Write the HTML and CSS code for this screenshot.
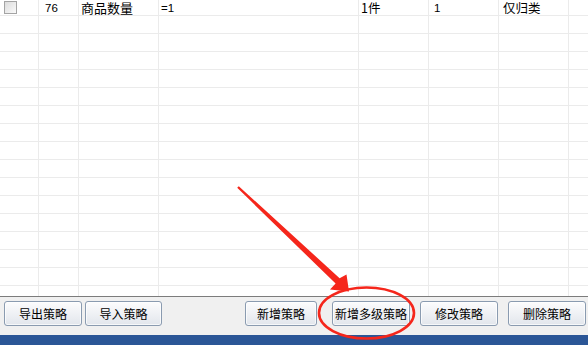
FILE: index.html
```html
<!DOCTYPE html>
<html lang="zh-CN">
  <head>
    <meta charset="UTF-8" />
    <title>策略列表</title>
    <link rel="stylesheet" href="styles.css">
  </head>
  <body>
    <div class="window">
      <!-- strategy table -->
      <div class="grid-wrap">
        <div class="grid">
          <div class="row first">
            <div class="cell c0"><span class="check"></span></div>
            <div class="cell c1 num pad6">76</div>
            <div class="cell c2 cjk">商品数量</div>
            <div class="cell c3 num">=1</div>
            <div class="cell c4 cjk">1件</div>
            <div class="cell c5 num pad5">1</div>
            <div class="cell c6 cjk pad4">仅归类</div>
            <div class="cell c7"></div>
          </div>
        </div>
      </div>

      <!-- toolbar -->
      <div class="toolbar">
        <button class="btn w78">导出策略</button>
        <button class="btn w77 gap3">导入策略</button>
        <div class="right-group">
          <button class="btn w72">新增策略</button>
          <button class="btn w78 gap15">新增多级策略</button>
          <button class="btn w78 gap10">修改策略</button>
          <button class="btn w78 gap10">删除策略</button>
        </div>
      </div>

      <div class="statusbar"></div>

      <!-- red annotation drawn over the screenshot -->
      <svg class="annotation" width="588" height="345" viewBox="0 0 588 345">
        <polygon fill="#f5261b" points="238.8,186.2 339.6,278.2 346.5,274.5 349,291.5 330,289.5 335.6,283.6 237.2,187.8" />
        <ellipse cx="366.5" cy="313" rx="47.5" ry="25.5" fill="none" stroke="#f5261b" stroke-width="2.6" />
      </svg>
    </div>

    <script>
      // fill the empty rows under the one data row
      var grid = document.querySelector(".grid");
      for (var i = 0; i < 16; i++) {
        var row = document.createElement("div");
        row.className = "row";
        for (var c = 0; c < 8; c++) {
          var cell = document.createElement("div");
          cell.className = "cell c" + c;
          row.appendChild(cell);
        }
        grid.appendChild(row);
      }
    </script>
  </body>
</html>
```

FILE: styles.css
```css
html, body {
  margin: 0;
  padding: 0;
}

body {
  font-family: "Liberation Sans", "Noto Sans CJK SC", sans-serif;
  background-color: #f0f0f0;
  width: 588px;
  height: 345px;
  overflow: hidden;
}

.window {
  position: relative;
  width: 588px;
  height: 345px;
  display: flex;
  flex-direction: column;
}

/* Table */
.grid-wrap {
  height: 296px;
  overflow: hidden;
  background: #fff;
  border-bottom: 1px solid #7c7c7c;
}

.row {
  display: grid;
  grid-template-columns: 39px 40px 80px 200px 70px 70px 70px 19px;
  height: 18px;
  box-sizing: border-box;
  border-bottom: 1px solid #ebebeb;
}

.row.first {
  height: 16px;
}

.cell {
  border-right: 1px solid #ebebeb;
  padding-left: 2px;
  color: #000;
  white-space: nowrap;
  display: flex;
  align-items: flex-start;
  padding-top: 1px;
}

.cell.c7 {
  border-right: none;
}

.num {
  font-size: 11.5px;
  line-height: 14px;
}

.cjk {
  font-family: "Noto Sans CJK SC", sans-serif;
  font-size: 12.5px;
  line-height: 14px;
}

.c2.cjk {
  font-size: 13px;
}

.pad4 { padding-left: 4px; }
.pad5 { padding-left: 5px; }
.pad6 { padding-left: 6px; }

.check {
  display: block;
  width: 11px;
  height: 11px;
  margin-left: 2px;
  border: 1px solid #a4a4a4;
  background: linear-gradient(135deg, #dcdcdc, #fafafa);
}

/* Toolbar */
.toolbar {
  display: flex;
  align-items: flex-start;
  padding: 4px 2px 0 4px;
  height: 38px;
  box-sizing: border-box;
}

.right-group {
  display: flex;
  margin-left: auto;
}

.btn {
  height: 25px;
  padding: 0;
  font-family: "Noto Sans CJK SC", sans-serif;
  font-size: 12px;
  color: #000;
  border: 1px solid #8a9bb0;
  border-radius: 3px;
  background: linear-gradient(#fcfcfd, #e2e6ec);
  box-shadow: inset 0 0 0 1px rgba(255, 255, 255, 0.7);
}

.w72 { width: 72px; }
.w77 { width: 77px; }
.w78 { width: 78px; }
.gap3 { margin-left: 3px; }
.gap10 { margin-left: 10px; }
.gap15 { margin-left: 15px; }

.statusbar {
  flex: 1;
  background-color: #2b5696;
}

/* Red arrow + circle */
.annotation {
  position: absolute;
  left: 0;
  top: 0;
  pointer-events: none;
}
```
